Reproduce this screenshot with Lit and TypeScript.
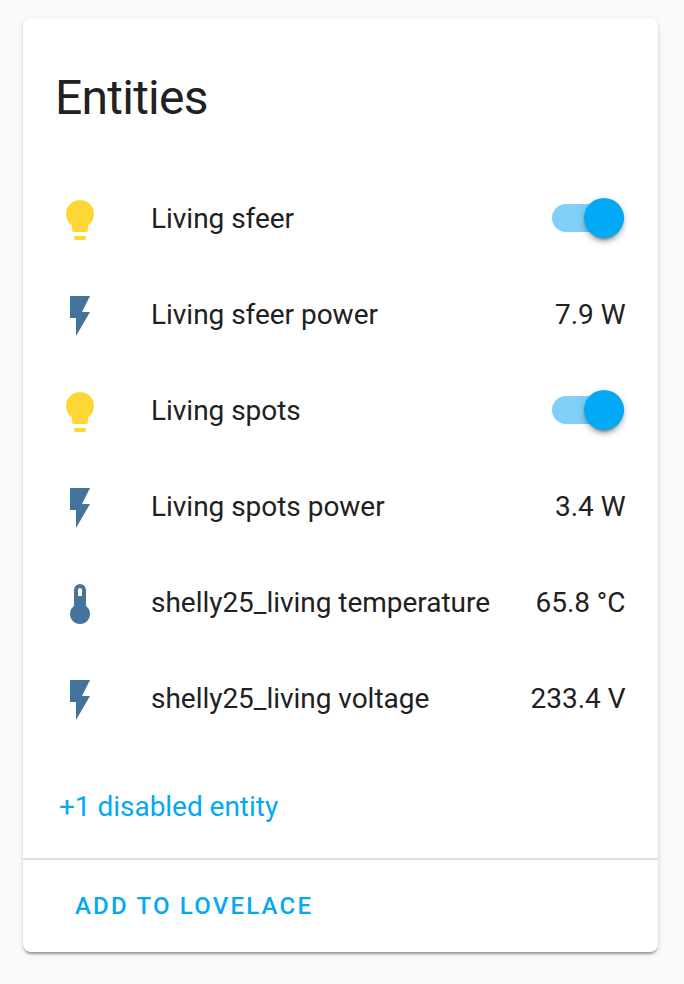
import { LitElement, html, css, svg } from "lit";
import { customElement } from "lit/decorators.js";

const icons = {
  bulb: "M12,2A7,7 0 0,0 5,9C5,11.38 6.19,13.47 8,14.74V17A1,1 0 0,0 9,18H15A1,1 0 0,0 16,17V14.74C17.81,13.47 19,11.38 19,9A7,7 0 0,0 12,2M9,21A1,1 0 0,0 10,22H14A1,1 0 0,0 15,21V20H9V21Z",
  flash: "M7,2V13H10V22L17,10H13L17,2H7Z",
  thermometer: "M15 13V5A3 3 0 0 0 9 5V13A5 5 0 1 0 15 13M12 4A1 1 0 0 1 13 5V8H11V5A1 1 0 0 1 12 4Z",
};

interface Entity {
  icon: keyof typeof icons;
  name: string;
  value?: string;
}

const entities: Entity[] = [
  { icon: "bulb", name: "Living sfeer" },
  { icon: "flash", name: "Living sfeer power", value: "7.9 W" },
  { icon: "bulb", name: "Living spots" },
  { icon: "flash", name: "Living spots power", value: "3.4 W" },
  { icon: "thermometer", name: "shelly25_living temperature", value: "65.8 °C" },
  { icon: "flash", name: "shelly25_living voltage", value: "233.4 V" },
];

@customElement("app-root")
export class AppRoot extends LitElement {
  static styles = css`
    :host {
      display: block;
      box-sizing: border-box;
      height: 984px;
      padding: 18px 26px 32px 23px;
      background: #fafafa;
      color: #212121;
      font-family: Roboto, sans-serif;
      font-size: 28px;
      letter-spacing: -0.03px;
    }
    .card {
      display: flex;
      flex-direction: column;
      box-sizing: border-box;
      height: 934px;
      background: #fff;
      border-radius: 8px;
      box-shadow: 0 4px 2px -2px rgba(0, 0, 0, 0.2), 0 2px 2px 0 rgba(0, 0, 0, 0.14), 0 2px 6px 0 rgba(0, 0, 0, 0.12);
    }
    h1 {
      margin: 0;
      padding: 40px 32px 0;
      height: 120px;
      font-size: 48px;
      font-weight: 400;
      line-height: 80px;
      letter-spacing: -0.75px;
    }
    .row {
      display: flex;
      align-items: center;
      height: 80px;
      margin-bottom: 16px;
      padding: 0 33px;
    }
    .icon {
      width: 48px;
      height: 48px;
      margin-top: 4px;
      fill: #44739e;
    }
    .bulb {
      fill: #fdd835;
    }
    .name {
      flex: 1;
      margin-left: 47px;
      white-space: nowrap;
    }
    .value {
      margin-right: -0.5px;
      white-space: nowrap;
    }
    .toggle {
      display: flex;
      align-items: center;
      justify-content: flex-end;
      width: 72px;
      height: 28px;
      margin-right: 1px;
      border-radius: 14px;
      background: #81d0fa;
    }
    .knob {
      width: 40px;
      height: 40px;
      border-radius: 50%;
      background: #03a9f4;
      box-shadow: 0 6px 2px -4px rgba(0, 0, 0, 0.26), 0 4px 4px 0 rgba(0, 0, 0, 0.18), 0 2px 10px 0 rgba(0, 0, 0, 0.14);
    }
    .more {
      height: 80px;
      line-height: 80px;
      margin-top: 13px;
      padding: 0 36px;
      color: #03a9f4;
    }
    .actions {
      margin-top: auto;
      height: 92px;
      border-top: 2px solid #e0e0e0;
      padding: 0 52px;
      line-height: 92px;
      font-size: 24px;
      font-weight: 500;
      letter-spacing: 2.2px;
      color: #03a9f4;
    }
  `;

  render() {
    return html`<div class="card">
      <h1>Entities</h1>
      <div>
        ${entities.map(
          (e) => html`<div class="row">
            <svg class="icon ${e.icon}" viewBox="0 0 24 24">${svg`<path d=${icons[e.icon]}></path>`}</svg>
            <span class="name">${e.name}</span>
            ${e.value
              ? html`<span class="value">${e.value}</span>`
              : html`<div class="toggle"><div class="knob"></div></div>`}
          </div>`
        )}
      </div>
      <div class="more">+1 disabled entity</div>
      <div class="actions">ADD TO LOVELACE</div>
    </div>`;
  }
}
